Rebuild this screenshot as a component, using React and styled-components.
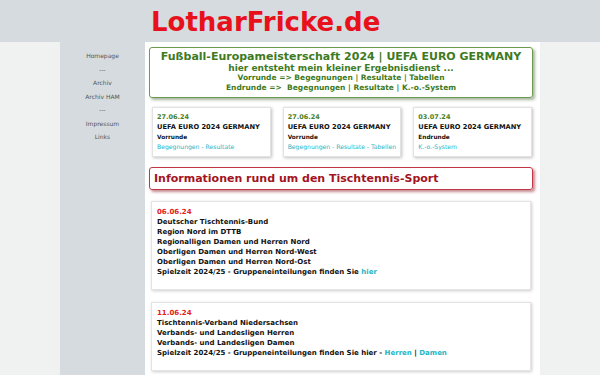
import styled, { createGlobalStyle } from "styled-components";

const GlobalStyle = createGlobalStyle`
  html, body {
    margin: 0;
    padding: 0;
    background: #f0f2f2;
    font-family: "DejaVu Sans", Verdana, sans-serif;
  }
  a {
    text-decoration: none;
  }
`;

const sidebarLinks = ["Homepage", "---", "Archiv", "Archiv HAM", "---", "Impressum", "Links"];

const cards = [
  { date: "27.06.24", stage: "Vorrunde", links: ["Begegnungen", "Resultate"] },
  { date: "27.06.24", stage: "Vorrunde", links: ["Begegnungen", "Resultate", "Tabellen"] },
  { date: "03.07.24", stage: "Endrunde", links: ["K.-o.-System"] },
];

function App() {
  return (
    <>
      <GlobalStyle />
      <Header>
        <HeaderInner>
          <SiteTitle>LotharFricke.de</SiteTitle>
        </HeaderInner>
      </Header>
      <Wrapper>
        <Sidebar>
          {sidebarLinks.map((l, i) => (
            <SideLink key={i} href="#">
              {l}
            </SideLink>
          ))}
        </Sidebar>
        <Content>
          <EuroBox>
            <EuroTitle>Fußball-Europameisterschaft 2024 | UEFA EURO GERMANY</EuroTitle>
            <EuroSub>hier entsteht mein kleiner Ergebnisdienst ...</EuroSub>
            <EuroLine>Vorrunde =&gt; Begegnungen | Resultate | Tabellen</EuroLine>
            <EuroLine>Endrunde =&gt;&nbsp; Begegnungen | Resultate | K.-o.-System</EuroLine>
          </EuroBox>

          <CardRow>
            {cards.map((c, i) => (
              <Card key={i}>
                <CardDate>{c.date}</CardDate>
                <CardTitle>UEFA EURO 2024 GERMANY</CardTitle>
                <CardStage>{c.stage}</CardStage>
                <CardLinks>
                  {c.links.map((l, j) => (
                    <span key={l}>
                      {j > 0 && " - "}
                      <TealLink href="#">{l}</TealLink>
                    </span>
                  ))}
                </CardLinks>
              </Card>
            ))}
          </CardRow>

          <SectionHead>Informationen rund um den Tischtennis-Sport</SectionHead>

          <NewsBox>
            <NewsDate>06.06.24</NewsDate>
            <NewsLine>Deutscher Tischtennis-Bund</NewsLine>
            <NewsLine>Region Nord im DTTB</NewsLine>
            <NewsLine>Regionalligen Damen und Herren Nord</NewsLine>
            <NewsLine>Oberligen Damen und Herren Nord-West</NewsLine>
            <NewsLine>Oberligen Damen und Herren Nord-Ost</NewsLine>
            <NewsLine>
              Spielzeit 2024/25 - Gruppeneinteilungen finden Sie <TealLink href="#">hier</TealLink>
            </NewsLine>
          </NewsBox>

          <NewsBox>
            <NewsDate>11.06.24</NewsDate>
            <NewsLine>Tischtennis-Verband Niedersachsen</NewsLine>
            <NewsLine>Verbands- und Landesligen Herren</NewsLine>
            <NewsLine>Verbands- und Landesligen Damen</NewsLine>
            <NewsLine>
              Spielzeit 2024/25 - Gruppeneinteilungen finden Sie hier -{" "}
              <TealLink href="#">Herren</TealLink> | <TealLink href="#">Damen</TealLink>
            </NewsLine>
          </NewsBox>
        </Content>
      </Wrapper>
    </>
  );
}

const Header = styled.header`
  background: #d5dbde;
  height: 42px;
`;

const HeaderInner = styled.div`
  width: 480px;
  margin: 0 auto;
  height: 100%;
  display: flex;
  align-items: center;
`;

const SiteTitle = styled.h1`
  margin: 0 0 0 91px;
  font-size: 26px;
  font-weight: bold;
  color: #e8101a;
  line-height: 1;
  padding-top: 2px;
`;

const Wrapper = styled.div`
  width: 480px;
  margin: 0 auto;
  display: flex;
  min-height: calc(100vh - 42px);
`;

const Sidebar = styled.nav`
  width: 85px;
  flex: none;
  background: #d5dbde;
  padding-top: 7px;
  display: flex;
  flex-direction: column;
  align-items: center;
`;

const SideLink = styled.a`
  display: block;
  font-size: 6px;
  line-height: 13.5px;
  color: #555;
`;

const Content = styled.main`
  flex: 1;
  background: #fff;
  padding: 5px 7px 0 4px;
  display: flex;
  flex-direction: column;
`;

const EuroBox = styled.section`
  border: 1px solid #6c9a4e;
  border-radius: 3px;
  box-shadow: 2px 2px 3px rgba(60, 90, 40, 0.45);
  padding: 2px 0 4px;
  text-align: center;
  color: #3e7a22;
  font-weight: bold;
`;

const EuroTitle = styled.div`
  font-size: 11px;
  line-height: 13px;
`;

const EuroSub = styled.div`
  font-size: 9px;
  line-height: 10px;
`;

const EuroLine = styled.div`
  font-size: 7.5px;
  line-height: 10px;
`;

const CardRow = styled.div`
  margin: 9px 1px 0 3px;
  display: grid;
  grid-template-columns: repeat(3, 1fr);
  gap: 12px;
`;

const Card = styled.div`
  height: 50px;
  box-sizing: border-box;
  border: 1px solid #e2e2e2;
  box-shadow: 1px 1px 3px rgba(0, 0, 0, 0.25);
  padding: 4px 0 0 4px;
  font-weight: bold;
`;

const CardDate = styled.div`
  font-size: 6.5px;
  line-height: 10px;
  color: #4a7f2a;
`;

const CardTitle = styled.div`
  font-size: 6.7px;
  line-height: 10px;
  color: #111;
`;

const CardStage = styled.div`
  font-size: 5.8px;
  line-height: 10px;
  color: #111;
`;

const CardLinks = styled.div`
  font-size: 6.1px;
  line-height: 10px;
  font-weight: normal;
  color: #2bb8c8;
  white-space: nowrap;
`;

const TealLink = styled.a`
  color: #22b5c5;
`;

const SectionHead = styled.h2`
  margin: 10px 0 0;
  height: 23px;
  box-sizing: border-box;
  border: 1px solid #c03848;
  border-radius: 3px;
  box-shadow: 2px 2px 3px rgba(140, 20, 30, 0.5);
  padding-left: 4px;
  font-size: 11px;
  line-height: 21px;
  color: #a3141e;
`;

const NewsBox = styled.article`
  margin: 11px 2px 1px 2px;
  border: 1px solid #e4e4e4;
  box-shadow: 1px 1px 3px rgba(0, 0, 0, 0.2);
  padding: 5px 0 12px 5px;
  font-weight: bold;
  font-size: 7px;
  line-height: 10px;
  color: #111;
  & + & {
    margin-top: 11px;
  }
`;

const NewsDate = styled.div`
  color: #e42020;
`;

const NewsLine = styled.div``;

export default App;
